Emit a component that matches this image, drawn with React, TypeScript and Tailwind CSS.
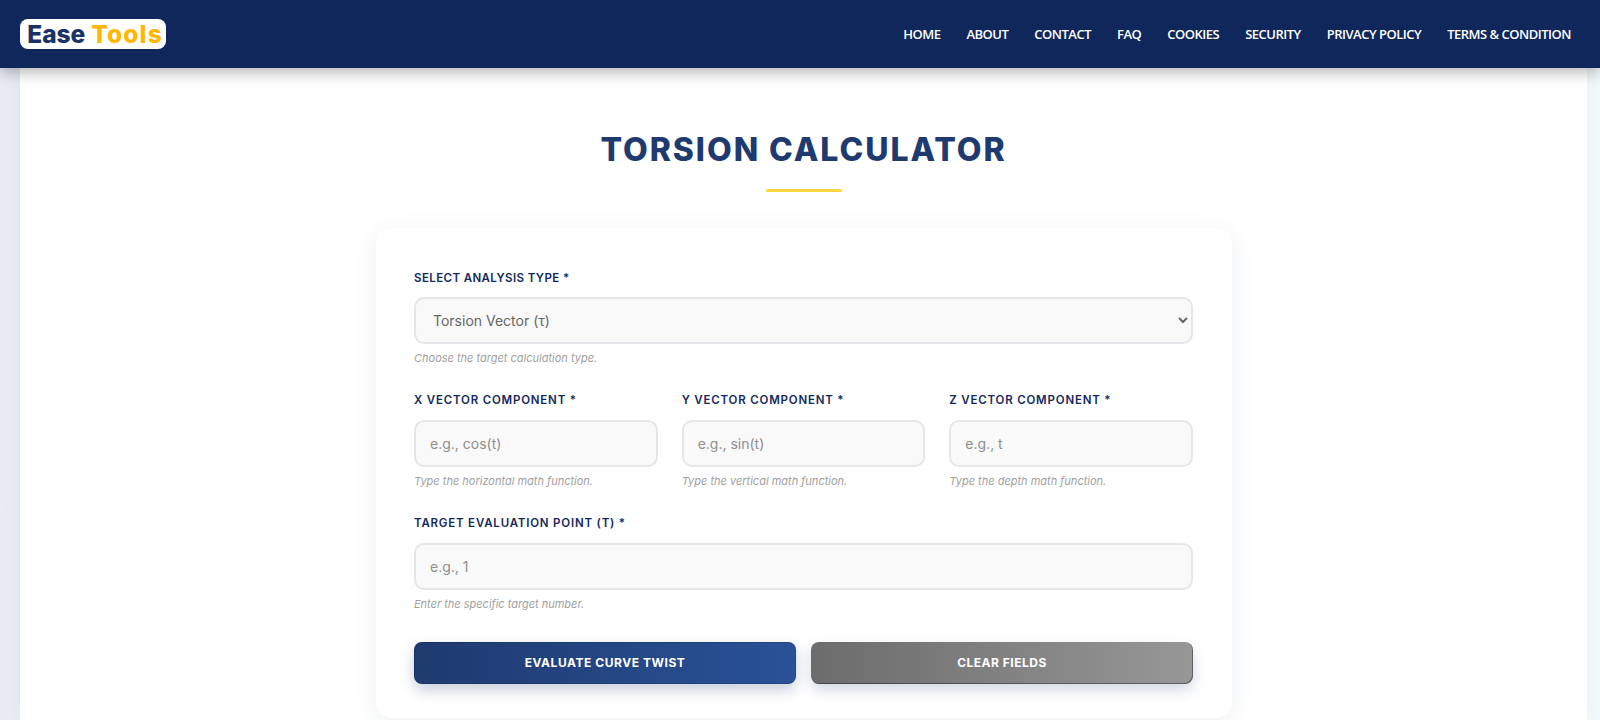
const NAV = ["HOME", "ABOUT", "CONTACT", "FAQ", "COOKIES", "SECURITY", "PRIVACY POLICY", "TERMS & CONDITION"];

const labelCls = "block h-[18px] text-[11.5px] leading-[20px] font-semibold tracking-[0.8px] text-[#14295c] [font-family:Inter,sans-serif]";
const inputCls = "mt-[12px] block h-[47px] w-full rounded-[10px] border-2 border-[#e5e6e9] bg-[#f9f9f9] px-[14px] text-[14px] text-[#666] outline-none placeholder:text-[#8f8f8f] [font-family:Inter,sans-serif]";
const hintCls = "mt-[7px] h-[15px] text-[11px] leading-[14px] italic text-[#a0a0a0] [font-family:Inter,sans-serif]";

function Field({ label, placeholder, hint }: { label: string; placeholder: string; hint: string }) {
  return (
    <div>
      <label className={labelCls}>{label}</label>
      <input className={inputCls} placeholder={placeholder} />
      <p className={hintCls}>{hint}</p>
    </div>
  );
}

export default function App() {
  return (
    <div className="h-[720px] overflow-hidden bg-gradient-to-r from-[#e8ecf3] to-[#f4f9fb] [font-family:Inter,sans-serif]">
      <header className="relative z-10 flex h-[68px] items-center justify-between bg-[#0f275b] pl-[20px] pr-[29px] shadow-[0_4px_14px_rgba(0,0,0,0.3)]">
        <div className="flex h-[30px] w-[146px] items-center justify-center rounded-[8px] bg-white pl-[4px] text-[24.5px] font-extrabold">
          <span className="text-[#1a3266]">Ease</span>
          <span className="ml-[6px] tracking-[1.1px] text-[#ffb703]">Tools</span>
        </div>
        <nav className="flex gap-[26px] pt-[1px]">
          {NAV.map((n) => (
            <a key={n} className="text-[13px] font-semibold tracking-[-0.5px] text-white [font-family:'Open_Sans',sans-serif]">
              {n}
            </a>
          ))}
        </nav>
      </header>

      <main className="ml-[20px] mr-[13px] h-[652px] bg-white pt-[63px] shadow-[0_0_20px_rgba(30,58,111,0.05)]">
        <h1 className="text-center text-[32px] leading-[38px] font-extrabold tracking-[1.95px] text-[#1e3a6f]">
          TORSION CALCULATOR
        </h1>
        <div className="ml-[746px] mt-[20px] h-[3px] w-[76px] rounded-full bg-[#ffd740]" />

        <div className="ml-[356px] mt-[36px] h-[490px] w-[856px] rounded-[16px] bg-white pl-[38px] pr-[39px] pt-[40px] shadow-[0_4px_24px_rgba(30,58,111,0.08)]">
          <label className={`${labelCls} !tracking-[0.4px]`}>SELECT ANALYSIS TYPE *</label>
          <select className="mt-[11px] block h-[47px] w-full rounded-[10px] border-2 border-[#e5e6e9] bg-[#f9f9f9] px-[13px] text-[14px] text-[#666] outline-none [font-family:Inter,sans-serif]">
            <option>Torsion Vector (τ)</option>
          </select>
          <p className={hintCls}>Choose the target calculation type.</p>

          <div className="mt-[24px] grid grid-cols-3 gap-[24px]">
            <Field label="X VECTOR COMPONENT *" placeholder="e.g., cos(t)" hint="Type the horizontal math function." />
            <Field label="Y VECTOR COMPONENT *" placeholder="e.g., sin(t)" hint="Type the vertical math function." />
            <Field label="Z VECTOR COMPONENT *" placeholder="e.g., t" hint="Type the depth math function." />
          </div>

          <div className="mt-[24px]">
            <Field label="TARGET EVALUATION POINT (T) *" placeholder="e.g., 1" hint="Enter the specific target number." />
          </div>

          <div className="mt-[30px] grid grid-cols-2 gap-[15px]">
            <button className="h-[42px] rounded-[8px] bg-gradient-to-r from-[#1e3a6f] to-[#2a5298] text-[12px] font-bold tracking-[0.55px] text-white shadow-[inset_0_0_0_1px_rgba(10,30,80,0.25),0_6px_14px_rgba(30,58,111,0.25)]">
              EVALUATE CURVE TWIST
            </button>
            <button className="h-[42px] rounded-[8px] bg-gradient-to-r from-[#6c6c6c] to-[#979797] text-[12px] font-bold tracking-[0.5px] text-white shadow-[inset_-1px_-1px_0_rgba(0,0,0,0.35),0_6px_14px_rgba(30,58,111,0.2)]">
              CLEAR FIELDS
            </button>
          </div>
        </div>
      </main>
    </div>
  );
}
